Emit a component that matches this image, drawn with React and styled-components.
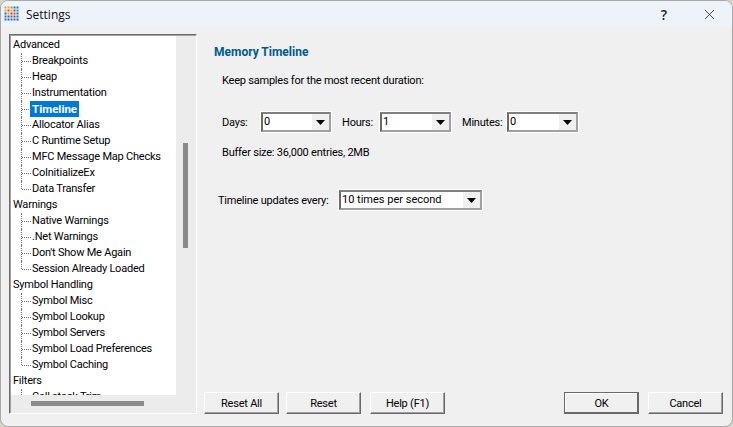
import React from 'react';
import styled, { createGlobalStyle } from 'styled-components';
import { X } from 'lucide-react';

const Global = createGlobalStyle`
	html, body {
		margin: 0;
		padding: 0;
		width: 733px;
		height: 427px;
		overflow: hidden;
		background: #d8d4c8;
	}
	* {
		box-sizing: border-box;
	}
`;

const tree = [
	{ label: 'Advanced', items: ['Breakpoints', 'Heap', 'Instrumentation', 'Timeline', 'Allocator Alias', 'C Runtime Setup', 'MFC Message Map Checks', 'CoInitializeEx', 'Data Transfer'] },
	{ label: 'Warnings', items: ['Native Warnings', '.Net Warnings', "Don't Show Me Again", 'Session Already Loaded'] },
	{ label: 'Symbol Handling', items: ['Symbol Misc', 'Symbol Lookup', 'Symbol Servers', 'Symbol Load Preferences', 'Symbol Caching'] },
	{ label: 'Filters', items: ['Call stack Trim'], open: true },
];

const logoColours = ['#e8a33d', '#e8a33d', '#e07b2c', '#2f6fb0', '#2f6fb0', '#e8a33d', '#d9532c', '#e8a33d', '#2f6fb0', '#3f86c6', '#2f6fb0', '#e8a33d', '#cf3a2a', '#d9532c', '#2f6fb0', '#2f6fb0', '#2f6fb0', '#cf3a2a', '#2f6fb0', '#2f6fb0', '#2f6fb0', '#2f6fb0', '#2f6fb0', '#2f6fb0', '#2f6fb0'];

const Logo = () => (
	<svg width="16" height="16" viewBox="0 0 16 16">
		{logoColours.map((c, i) => (
			<rect key={i} x={(i % 5) * 3 + 0.5} y={Math.floor(i / 5) * 3 + 0.5} width="2" height="2" fill={c} />
		))}
	</svg>
);

const Arrow = () => (
	<svg width="9" height="5" viewBox="0 0 9 5">
		<path d="M0 0h9L4.5 5z" fill="#000" />
	</svg>
);

const Select = ({ value, width }) => (
	<SelectBox $width={width}>
		<SelectValue>{value}</SelectValue>
		<SelectButton>
			<Arrow />
		</SelectButton>
	</SelectBox>
);

const App = () => {
	return (
		<>
			<Global />
			<Window>
				<TitleBar>
					<TitleLeft>
						<Logo />
						<Title>Settings</Title>
					</TitleLeft>
					<TitleButtons>
						<Help>?</Help>
						<Close>
							<X size={17} strokeWidth={1.1} color="#1a1a1a" />
						</Close>
					</TitleButtons>
				</TitleBar>
				<Body>
					<TreePanel>
						<TreeList>
							{tree.map((group) => (
								<Group key={group.label}>
									<GroupLabel>{group.label}</GroupLabel>
									{group.items.map((item, i) => (
										<TreeRow key={item} $last={i === group.items.length - 1 && !group.open}>
											<TreeLabel $selected={item === 'Timeline'}>{item}</TreeLabel>
										</TreeRow>
									))}
								</Group>
							))}
						</TreeList>
						<VerticalTrack>
							<VerticalThumb />
						</VerticalTrack>
						<HorizontalTrack>
							<HorizontalThumb />
						</HorizontalTrack>
					</TreePanel>
					<Main>
						<Content>
							<Heading>Memory Timeline</Heading>
							<Intro>Keep samples for the most recent duration:</Intro>
							<DurationRow>
								<FieldLabel $width={39}>Days:</FieldLabel>
								<Select value="0" width={70} />
								<FieldLabel $width={38} $left={11}>Hours:</FieldLabel>
								<Select value="1" width={71} />
								<FieldLabel $width={45} $left={11}>Minutes:</FieldLabel>
								<Select value="0" width={71} />
							</DurationRow>
							<BufferSize>Buffer size: 36,000 entries, 2MB</BufferSize>
							<UpdateRow>
								<UpdateLabel>Timeline updates every:</UpdateLabel>
								<Select value="10 times per second" width={143} />
							</UpdateRow>
						</Content>
						<Footer>
							<ButtonGroup>
								<Button $width={75}>Reset All</Button>
								<Button $width={75} $left={7}>Reset</Button>
								<Button $width={75} $left={9}>Help (F1)</Button>
							</ButtonGroup>
							<ButtonGroup>
								<Button $width={75} $primary>OK</Button>
								<Button $width={75} $left={9}>Cancel</Button>
							</ButtonGroup>
						</Footer>
					</Main>
				</Body>
			</Window>
		</>
	);
};

const Window = styled.div`
	width: 733px;
	height: 427px;
	background: #f0f0f0;
	border: 1px solid #a9a9a9;
	border-radius: 8px;
	overflow: hidden;
	display: flex;
	flex-direction: column;
	font-family: 'Roboto', 'Liberation Sans', sans-serif;
	font-size: 11px;
	letter-spacing: -0.22px;
	color: #000;
`;

const TitleBar = styled.div`
	height: 26px;
	background: #eef3fa;
	display: flex;
	align-items: center;
	justify-content: space-between;
	flex-shrink: 0;
`;

const TitleLeft = styled.div`
	display: flex;
	align-items: center;
	gap: 6px;
	padding-left: 3px;
`;

const Title = styled.span`
	font-family: 'Open Sans', sans-serif;
	font-size: 12px;
	letter-spacing: 0;
	color: #111;
`;

const TitleButtons = styled.div`
	display: flex;
	align-items: center;
	padding-right: 14px;
`;

const Help = styled.span`
	width: 16px;
	margin-right: 29px;
	text-align: center;
	font-family: 'Open Sans', sans-serif;
	font-weight: 600;
	font-size: 14px;
	letter-spacing: 0;
	color: #1a1a1a;
`;

const Close = styled.span`
	display: flex;
`;

const Body = styled.div`
	flex: 1;
	display: flex;
	padding: 7px 9px 12px 8px;
	min-height: 0;
`;

const TreePanel = styled.div`
	position: relative;
	width: 188px;
	flex-shrink: 0;
	border: 1px solid;
	border-color: #6d6d6d #fff #fff #6d6d6d;
	box-shadow: inset 1px 1px 0 #a0a0a0;
	background: #ececec;
	overflow: hidden;
	padding-top: 1px;
`;

const TreeList = styled.div`
	width: 165px;
	height: 359px;
	margin-left: 1px;
	background: #fff;
	overflow: hidden;
	padding: 1px 0 0 2px;
`;

const Group = styled.div``;

const GroupLabel = styled.div`
	height: 16px;
	line-height: 16px;
	white-space: nowrap;
`;

const TreeRow = styled.div`
	height: 16px;
	position: relative;
	padding-left: 19px;
	display: flex;
	align-items: center;
	&::before {
		content: '';
		position: absolute;
		left: 8px;
		top: 0;
		height: ${(p) => (p.$last ? '8px' : '16px')};
		border-left: 1px dotted #777;
	}
	&::after {
		content: '';
		position: absolute;
		left: 9px;
		top: 8px;
		width: 9px;
		border-top: 1px dotted #777;
	}
`;

const TreeLabel = styled.span`
	white-space: nowrap;
	line-height: 16px;
	padding: 0 2px 0 0;
	margin-left: ${(p) => (p.$selected ? '-2px' : '0')};
	padding-left: ${(p) => (p.$selected ? '2px' : '0')};
	background: ${(p) => (p.$selected ? '#0078d7' : 'transparent')};
	color: ${(p) => (p.$selected ? '#fff' : '#000')};
	font-weight: ${(p) => (p.$selected ? 700 : 400)};
	font-size: ${(p) => (p.$selected ? '11.5px' : '11px')};
	letter-spacing: ${(p) => (p.$selected ? '0' : '-0.22px')};
`;

const VerticalTrack = styled.div`
	position: absolute;
	top: 0;
	right: 0;
	width: 20px;
	height: 100%;
`;

const VerticalThumb = styled.div`
	position: absolute;
	left: 7px;
	top: 108px;
	width: 5px;
	height: 105px;
	background: #8a8a8a;
`;

const HorizontalTrack = styled.div`
	position: absolute;
	left: 0;
	bottom: 0;
	width: 165px;
	height: 18px;
`;

const HorizontalThumb = styled.div`
	position: absolute;
	left: 21px;
	top: 6px;
	width: 113px;
	height: 5px;
	background: #8a8a8a;
`;

const Main = styled.div`
	flex: 1;
	display: flex;
	flex-direction: column;
	padding-left: 7px;
	min-width: 0;
`;

const Content = styled.div`
	flex: 1;
	padding: 10px 0 0 10px;
`;

const Heading = styled.div`
	font-size: 12px;
	letter-spacing: 0;
	font-weight: 700;
	color: #005a8c;
	line-height: 16px;
`;

const Intro = styled.div`
	line-height: 16px;
	margin: 13px 0 0 8px;
`;

const DurationRow = styled.div`
	display: flex;
	align-items: center;
	margin: 23px 0 0 8px;
`;

const FieldLabel = styled.span`
	width: ${(p) => p.$width}px;
	margin-left: ${(p) => p.$left || 0}px;
	white-space: nowrap;
`;

const SelectBox = styled.div`
	width: ${(p) => p.$width}px;
	height: 20px;
	display: flex;
	background: #fff;
	border: 2px solid;
	border-color: #808080 #a0a0a0 #a0a0a0 #696969;
	outline: 1px solid #fff;
	outline-offset: 0;
`;

const SelectValue = styled.span`
	flex: 1;
	padding-left: 1px;
	font-size: 11px;
	letter-spacing: 0;
	line-height: 16px;
	white-space: nowrap;
`;

const SelectButton = styled.span`
	width: 18px;
	display: flex;
	align-items: center;
	justify-content: center;
	background: #f0f0f0;
	border-left: 1px solid #fff;
`;

const BufferSize = styled.div`
	line-height: 16px;
	margin: 13px 0 0 8px;
`;

const UpdateRow = styled.div`
	display: flex;
	align-items: center;
	margin: 29px 0 0 4px;
`;

const UpdateLabel = styled.span`
	width: 121px;
	white-space: nowrap;
`;

const Footer = styled.div`
	display: flex;
	justify-content: space-between;
	height: 22px;
`;

const ButtonGroup = styled.div`
	display: flex;
`;

const Button = styled.div`
	width: ${(p) => p.$width}px;
	height: 22px;
	margin-left: ${(p) => p.$left || 0}px;
	display: flex;
	align-items: center;
	justify-content: center;
	background: #f0f0f0;
	border: 1px solid;
	border-color: ${(p) => (p.$primary ? '#696969' : '#fff #696969 #696969 #fff')};
	box-shadow: ${(p) => (p.$primary ? 'inset -1px -1px 0 #696969, inset 1px 1px 0 #fff' : 'inset -1px -1px 0 #a0a0a0')};
`;

export default App;
